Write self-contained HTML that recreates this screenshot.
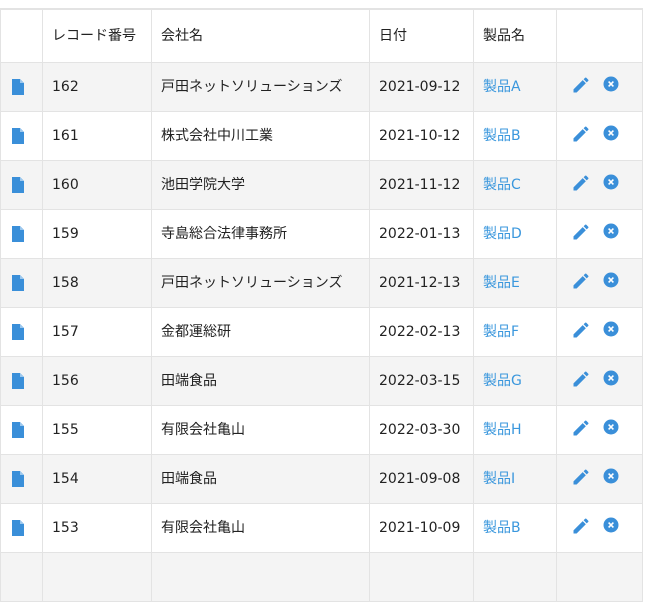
<!DOCTYPE html>
<html><head><meta charset="utf-8"><style>
body{margin:0;background:#fff;width:649px;height:564px;overflow:hidden;font-family:"DejaVu Sans","Noto Sans CJK JP",sans-serif;font-size:14px;color:#222}
table{position:absolute;left:0;top:8px;border-collapse:collapse;table-layout:fixed;width:643px}
td,th{border:1px solid #e3e3e3;padding:0 0 0 9px;height:48px;text-align:left;font-weight:normal;white-space:nowrap;line-height:20px}
th{height:52px}
tbody tr:nth-child(odd) td{background:#f4f4f4}
tr.h th{border-top:2px solid #e3e3e3}
a{color:#3a97dd;text-decoration:none}
td.i{padding-left:11px}
td.a{padding-left:14px}
svg{vertical-align:middle}
</style></head><body>
<table>
<colgroup><col style="width:42px"><col style="width:109px"><col style="width:218px"><col style="width:104px"><col style="width:83px"><col style="width:86px"></colgroup>
<thead><tr class="h"><th></th><th>レコード番号</th><th>会社名</th><th>日付</th><th>製品名</th><th></th></tr></thead>
<tbody id="b"></tbody>
</table>
<script>
var d=[["162","戸田ネットソリューションズ","2021-09-12","A"],["161","株式会社中川工業","2021-10-12","B"],["160","池田学院大学","2021-11-12","C"],["159","寺島総合法律事務所","2022-01-13","D"],["158","戸田ネットソリューションズ","2021-12-13","E"],["157","金都運総研","2022-02-13","F"],["156","田端食品","2022-03-15","G"],["155","有限会社亀山","2022-03-30","H"],["154","田端食品","2021-09-08","I"],["153","有限会社亀山","2021-10-09","B"],["","","",""]];
var f='<svg width="12" height="16" viewBox="0 0 12 16"><path d="M0 0H8L12 4V16H0Z" fill="#3a8fd9"/><path d="M8 0V4H12Z" fill="#9cc8ee"/></svg>';
var p='<svg width="20" height="20" viewBox="0 0 24 24" style="margin-top:-4px"><path d="M3 17.25V21h3.75L17.8 9.94l-3.75-3.75L3 17.25zM20.7 7.04a1 1 0 0 0 0-1.41l-2.34-2.34a1 1 0 0 0-1.41 0l-1.83 1.83 3.75 3.75 1.83-1.83z" fill="#3a8fd9"/></svg>';
var x='<svg width="16" height="16" viewBox="0 0 16 16" style="margin-left:12px;margin-top:-6px"><circle cx="8" cy="8" r="7.5" fill="#3a8fd9"/><path d="M5.6 5.6L10.4 10.4M10.4 5.6L5.6 10.4" stroke="#fff" stroke-width="1.6"/></svg>';
var h='';d.forEach(function(r){if(!r[0]){h+='<tr><td></td><td></td><td></td><td></td><td></td><td></td></tr>';return;}h+='<tr><td class="i">'+f+'</td><td>'+r[0]+'</td><td>'+r[1]+'</td><td>'+r[2]+'</td><td><a>製品'+r[3]+'</a></td><td class="a">'+p+x+'</td></tr>';});
document.getElementById('b').innerHTML=h;
</script>
</body></html>
